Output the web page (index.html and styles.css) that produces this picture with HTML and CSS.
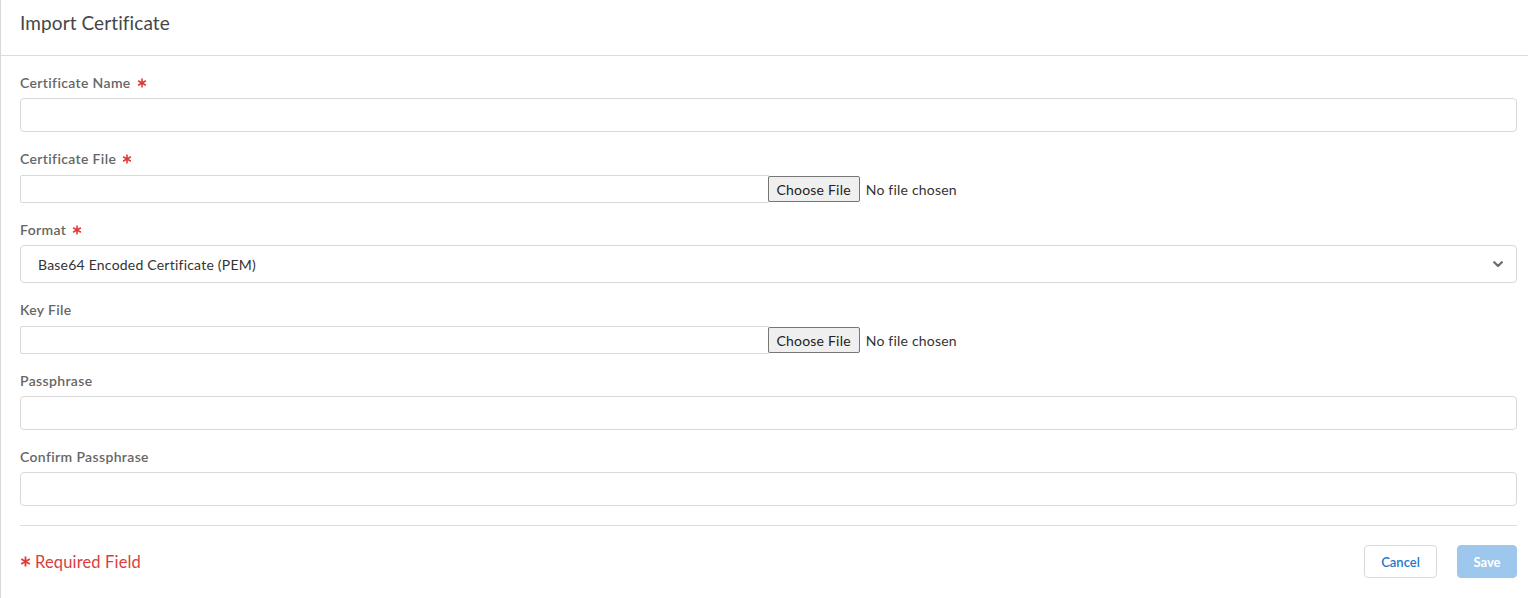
FILE: index.html
```html
<!DOCTYPE html>
<html lang="en">
<head>
<meta charset="utf-8">
<title>Import Certificate</title>
<link rel="stylesheet" href="styles.css">
</head>
<body>
<div class="panel">
  <div class="panel-header">
    <h1 class="panel-title">Import Certificate</h1>
  </div>
  <form class="panel-body">
    <div class="field">
      <label class="field-label">Certificate Name <svg class="req" viewBox="0 0 10 10"><path d="M5 0.5V9.5M1.1 2.75L8.9 7.25M1.1 7.25L8.9 2.75"/></svg></label>
      <input class="text-input" type="text">
    </div>
    <div class="field">
      <label class="field-label">Certificate File <svg class="req" viewBox="0 0 10 10"><path d="M5 0.5V9.5M1.1 2.75L8.9 7.25M1.1 7.25L8.9 2.75"/></svg></label>
      <div class="file-row">
        <div class="file-box"></div>
        <input class="file-input" type="file">
      </div>
    </div>
    <div class="field">
      <label class="field-label">Format <svg class="req" viewBox="0 0 10 10"><path d="M5 0.5V9.5M1.1 2.75L8.9 7.25M1.1 7.25L8.9 2.75"/></svg></label>
      <div class="select-wrap">
        <select class="select-input">
          <option>Base64 Encoded Certificate (PEM)</option>
        </select>
        <svg class="chevron" width="10" height="7" viewBox="0 0 10 7"><path d="M1.2 1.2 L5 5 L8.8 1.2" fill="none" stroke="#6b6b6b" stroke-width="2.2" stroke-linecap="round" stroke-linejoin="round"/></svg>
      </div>
    </div>
    <div class="field">
      <label class="field-label">Key File</label>
      <div class="file-row">
        <div class="file-box"></div>
        <input class="file-input" type="file">
      </div>
    </div>
    <div class="field">
      <label class="field-label">Passphrase</label>
      <input class="text-input" type="password">
    </div>
    <div class="field">
      <label class="field-label">Confirm Passphrase</label>
      <input class="text-input" type="password">
    </div>
    <div class="footer">
      <div class="required-note"><svg class="req-big" viewBox="0 0 10 10"><path d="M5 0.5V9.5M1.1 2.75L8.9 7.25M1.1 7.25L8.9 2.75"/></svg> Required Field</div>
      <div class="actions">
        <button type="button" class="btn btn-cancel">Cancel</button>
        <button type="button" class="btn btn-save">Save</button>
      </div>
    </div>
  </form>
</div>
</body>
</html>
```

FILE: styles.css
```css
* { box-sizing: border-box; }
html, body {
  margin: 0;
  padding: 0;
  background: #fff;
  font-family: Lato, "Liberation Sans", sans-serif;
}
.panel {
  border-left: 1px solid #d9d9d9;
  height: 598px;
}
.panel-header {
  height: 56px;
  border-bottom: 1px solid #dcdcdc;
  padding: 12px 19px 0;
}
.panel-title {
  margin: 0;
  font-size: 19px;
  font-weight: 400;
  line-height: 22px;
  letter-spacing: 0.1px;
  color: #464646;
}
.panel-body {
  padding: 19px 11px 0 19px;
}
.field {
  display: flex;
  flex-direction: column;
  gap: 7px;
  margin-bottom: 19px;
}
.field-label {
  display: flex;
  align-items: center;
  gap: 6px;
  font-size: 14px;
  font-weight: 600;
  line-height: 16px;
  letter-spacing: 0.35px;
  color: #666;
}
.req {
  width: 10px;
  height: 10px;
  fill: none;
  stroke: #e03b3b;
  stroke-width: 1.6;
}
.text-input {
  height: 34px;
  border: 1px solid #d9d9d9;
  border-radius: 4px;
  padding: 0 12px;
  font-family: inherit;
  font-size: 14px;
  outline: none;
}
.file-row {
  display: flex;
  align-items: center;
  height: 28px;
  margin-top: 1px;
}
.file-box {
  width: 50%;
  height: 28px;
  border: 1px solid #d9d9d9;
  border-radius: 2px 0 0 2px;
}
.file-input {
  margin-left: -1px;
  font-family: Lato, "Liberation Sans", sans-serif;
  font-size: 14px;
  letter-spacing: 0.2px;
  color: #333;
}
.file-input::file-selector-button {
  font-family: Lato, "Liberation Sans", sans-serif;
  font-size: 14px;
  letter-spacing: 0.2px;
  height: 26px;
  padding: 0 8px;
  margin-right: 6px;
  border: 1px solid #767676;
  border-radius: 2px;
  background: #efefef;
  color: #222;
}
.select-wrap {
  position: relative;
}
.select-input {
  appearance: none;
  -webkit-appearance: none;
  width: 100%;
  height: 38px;
  border: 1px solid #d9d9d9;
  border-radius: 4px;
  background: #fff;
  padding: 0 17px;
  font-family: inherit;
  font-size: 14px;
  letter-spacing: 0.22px;
  color: #333;
  outline: none;
}
.chevron {
  position: absolute;
  right: 14px;
  top: 16px;
  pointer-events: none;
}
.footer {
  border-top: 1px solid #dcdcdc;
  padding-top: 19px;
  display: flex;
  justify-content: space-between;
  align-items: center;
}
.required-note {
  display: flex;
  align-items: center;
  gap: 4px;
  color: #d9403f;
  font-size: 16.5px;
  line-height: 20px;
  letter-spacing: 0.15px;
}
.req-big {
  width: 11px;
  height: 11px;
  fill: none;
  stroke: #d9403f;
  stroke-width: 1.7;
}
.actions {
  display: flex;
  gap: 20px;
}
.btn {
  height: 33px;
  border-radius: 4px;
  font-family: inherit;
  font-size: 13px;
  cursor: pointer;
}
.btn-cancel {
  width: 73px;
  background: #fff;
  border: 1px solid #d9d9d9;
  color: #1f78c8;
  font-weight: 600;
}
.btn-save {
  width: 60px;
  background: #9dc7ec;
  border: 1px solid #9dc7ec;
  color: #fff;
  font-weight: 700;
}
```
